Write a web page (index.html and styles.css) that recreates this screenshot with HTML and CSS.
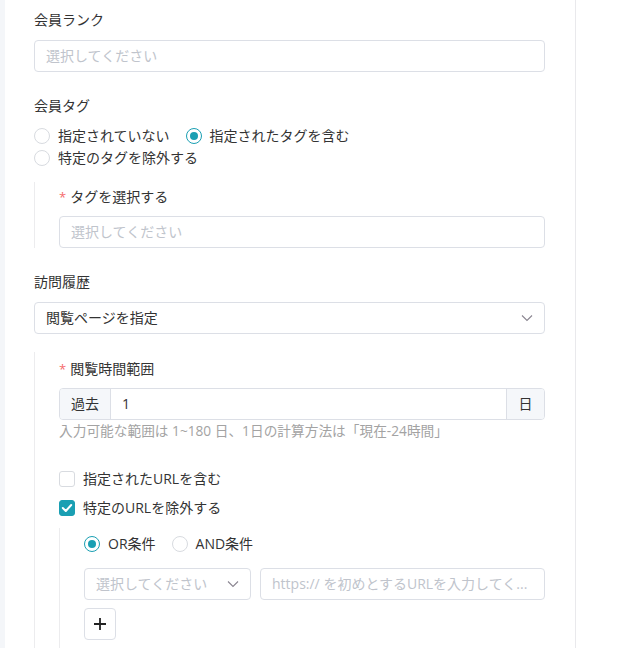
FILE: index.html
```html
<!DOCTYPE html>
<html lang="ja">
<head>
<meta charset="utf-8">
<link rel="stylesheet" href="styles.css">
</head>
<body>
<div class="page">
  <div class="strip"></div>
  <div class="panel">
    <div class="label first">会員ランク</div>
    <div class="field placeholder">選択してください</div>

    <div class="label sec">会員タグ</div>
    <div class="radios">
      <div class="radio-row">
        <span class="radio-item"><span class="radio"></span>指定されていない</span>
        <span class="radio-item"><span class="radio on"></span>指定されたタグを含む</span>
      </div>
      <div class="radio-row">
        <span class="radio-item"><span class="radio"></span>特定のタグを除外する</span>
      </div>
    </div>

    <div class="nest nest-tag">
      <div class="label"><span class="req">*</span>タグを選択する</div>
      <div class="field placeholder">選択してください</div>
    </div>

    <div class="label sec">訪問履歴</div>
    <div class="field select">
      <span>閲覧ページを指定</span>
      <svg class="chev" width="12" height="8" viewBox="0 0 12 8"><path d="M1 1.5 L6 6.5 L11 1.5" fill="none" stroke="#8a8590" stroke-width="1.1"/></svg>
    </div>

    <div class="nest nest-time">
      <div class="label"><span class="req">*</span>閲覧時間範囲</div>
      <div class="group">
        <div class="addon left">過去</div>
        <div class="group-input">1</div>
        <div class="addon right">日</div>
      </div>
      <div class="help">入力可能な範囲は 1~180 日、1日の計算方法は「現在-24時間」</div>

      <div class="check-row first-check"><span class="check"></span>指定されたURLを含む</div>
      <div class="check-row"><span class="check on"><svg width="12" height="10" viewBox="0 0 12 10"><path d="M1.8 5 L4.8 8 L10.2 2" fill="none" stroke="#fff" stroke-width="2" stroke-linecap="round" stroke-linejoin="round"/></svg></span>特定のURLを除外する</div>

      <div class="nest nest-url">
        <div class="radio-row">
          <span class="radio-item"><span class="radio on"></span>OR条件</span>
          <span class="radio-item"><span class="radio"></span>AND条件</span>
        </div>
        <div class="url-row">
          <div class="field select small placeholder">
            <span>選択してください</span>
            <svg class="chev" width="12" height="8" viewBox="0 0 12 8"><path d="M1 1.5 L6 6.5 L11 1.5" fill="none" stroke="#8a8590" stroke-width="1.1"/></svg>
          </div>
          <div class="field url placeholder">https:// を初めとするURLを入力してく...</div>
        </div>
        <div class="plus-btn">
          <svg width="14" height="14" viewBox="0 0 14 14"><path d="M7 1 V13 M1 7 H13" stroke="#222" stroke-width="1.8"/></svg>
        </div>
      </div>
    </div>
  </div>
</div>
</body>
</html>
```

FILE: styles.css
```css
* { box-sizing: border-box; }
html, body { margin: 0; padding: 0; background: #fff; }
body {
  font-family: "Open Sans", "Noto Sans CJK JP", sans-serif;
  font-size: 14px;
  color: #333;
  overflow: hidden;
}
.page {
  display: flex;
  height: 648px;
}
.strip {
  width: 5px;
  background: #f4f6f9;
  flex: none;
}
.panel {
  width: 571px;
  flex: none;
  border-right: 1px solid #e9e9ec;
  padding: 9px 30px 0 29px;
}
.label {
  line-height: 22px;
  height: 22px;
  color: #333;
  white-space: nowrap;
}
.label.sec { margin-top: 23px; }
.req {
  color: #f56c6c;
  font-size: 13px;
  margin-right: 4px;
}
.field {
  margin-top: 9px;
  height: 32px;
  border: 1px solid #dcdfe6;
  border-radius: 4px;
  padding: 0 11px;
  line-height: 30px;
  color: #333;
  white-space: nowrap;
  overflow: hidden;
}
.placeholder { color: #c0c4cc; }
.select {
  display: flex;
  align-items: center;
  justify-content: space-between;
}
.select .chev { margin-right: 0; flex: none; }

.radios { margin-top: 8px; }
.radio-row {
  display: flex;
  gap: 16px;
  line-height: 22px;
  height: 22px;
}
.radio-item {
  display: inline-flex;
  align-items: center;
  white-space: nowrap;
}
.radio {
  width: 16px;
  height: 16px;
  border: 1px solid #d8dbe0;
  border-radius: 50%;
  margin-right: 8px;
  display: inline-flex;
  align-items: center;
  justify-content: center;
  flex: none;
}
.radio.on { border-color: #1a9fb3; border-width: 1.5px; }
.radio.on::after {
  content: "";
  width: 8px;
  height: 8px;
  border-radius: 50%;
  background: #1a9fb3;
}

.nest {
  border-left: 1px solid #ececee;
  padding-left: 24px;
}
.nest-tag {
  margin-top: 13px;
  padding-top: 4px;
  padding-bottom: 0;
}
.nest-tag .field { margin-top: 8px; }
.select.field { margin-top: 9px; }
.nest-time {
  margin-top: 18px;
  padding-top: 6px;
  height: 296px;
}
.group {
  margin-top: 8px;
  display: flex;
  height: 32px;
  border: 1px solid #dcdfe6;
  border-radius: 4px;
  overflow: hidden;
}
.addon {
  background: #f5f7fa;
  line-height: 30px;
  color: #333;
  flex: none;
}
.addon.left { width: 51px; text-align: center; border-right: 1px solid #dcdfe6; }
.addon.right { width: 38px; text-align: center; border-left: 1px solid #dcdfe6; }
.group-input {
  flex: 1;
  line-height: 30px;
  padding-left: 11px;
}
.help {
  line-height: 22px;
  color: #a3a3a3;
  font-size: 13.7px;
  white-space: nowrap;
}
.check-row {
  display: flex;
  align-items: center;
  line-height: 22px;
  height: 22px;
  margin-top: 7px;
  white-space: nowrap;
}
.check-row.first-check { margin-top: 26px; }
.check {
  width: 16px;
  height: 16px;
  border: 1px solid #d8dbe0;
  border-radius: 3px;
  margin-right: 8px;
  flex: none;
  display: inline-flex;
  align-items: center;
  justify-content: center;
}
.check.on { background: #1a9fb3; border-color: #1a9fb3; }
.nest-url {
  margin-top: 9px;
  padding-top: 5px;
  height: 130px;
}
.url-row {
  display: flex;
  gap: 9px;
  margin-top: 13px;
}
.url-row .field { margin-top: 0; }
.field.small { width: 167px; flex: none; }
.field.url { flex: 1; }
.plus-btn {
  margin-top: 8px;
  width: 32px;
  height: 32px;
  border: 1px solid #dcdfe6;
  border-radius: 4px;
  display: flex;
  align-items: center;
  justify-content: center;
}
```
